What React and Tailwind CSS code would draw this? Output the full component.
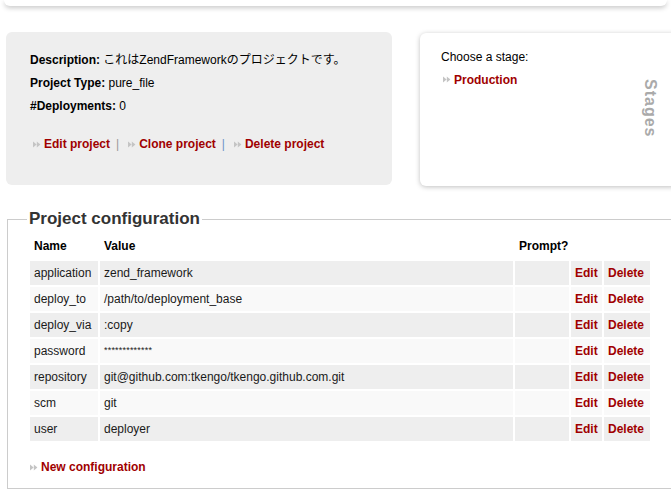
const rows = [
  ['application', 'zend_framework'],
  ['deploy_to', '/path/to/deployment_base'],
  ['deploy_via', ':copy'],
  ['password', null],
  ['repository', 'git@github.com:tkengo/tkengo.github.com.git'],
  ['scm', 'git'],
  ['user', 'deployer'],
];

const Bullet = ({ className = '' }) => (
  <svg width="8" height="7" viewBox="0 0 8 7" className={`inline-block shrink-0 ${className}`}>
    <polygon points="0,0.5 3.6,3.5 0,6.5" fill="#c4c4c4" />
    <polygon points="3.8,0.5 7.4,3.5 3.8,6.5" fill="#c4c4c4" />
  </svg>
);

const Link = ({ children, className = '' }) => (
  <span className={`inline-flex items-center ${className}`}>
    <Bullet className="ml-[3px] mr-[3px]" />
    <span className="font-bold text-[#a00000]">{children}</span>
  </span>
);

export default function App() {
  return (
    <div
      className="relative h-[495px] w-[671px] overflow-hidden bg-white text-[12px] text-[#000]"
      style={{ fontFamily: '"Liberation Sans", Arial, "Noto Sans CJK JP", sans-serif' }}
    >
      <div className="ml-[4px] h-[6px] w-[663px] rounded-b-[7px] bg-white shadow-[0_2px_5px_rgba(0,0,0,0.22)]" />

      <div className="mt-[26px] flex items-start">
        <div className="ml-[6px] h-[153px] w-[386px] shrink-0 rounded-[6px] bg-[#eeeeee] px-[24px] pt-[17px]">
          <div className="leading-[23px]">
            <span className="font-bold">Description:</span> これはZendFrameworkのプロジェクトです。
          </div>
          <div className="leading-[23px]">
            <span className="font-bold">Project Type:</span> pure_file
          </div>
          <div className="leading-[23px]">
            <span className="font-bold">#Deployments:</span> 0
          </div>
          <div className="mt-[15px] flex items-center leading-[23px]">
            <Link>Edit project</Link>
            <span className="mx-[6px] text-[#999]">|</span>
            <Link>Clone project</Link>
            <span className="mx-[6px] text-[#6b94c8]">|</span>
            <Link>Delete project</Link>
          </div>
        </div>

        <div className="ml-[28px] mt-[1px] flex h-[153px] w-[258px] shrink-0 rounded-[6px] bg-white shadow-[0_1px_5px_rgba(0,0,0,0.25)]">
          <div className="flex-1 pl-[21px] pt-[15px]">
            <div className="leading-[18px]">Choose a stage:</div>
            <div className="mt-[4px] leading-[18px]">
              <Link className="-ml-[1px]">Production</Link>
            </div>
          </div>
          <div className="pr-[20px] pt-[46px]">
            <div className="text-[16px] font-bold leading-[16px] tracking-[1px] text-[#aaaaaa] [writing-mode:vertical-rl]">
              Stages
            </div>
          </div>
        </div>
      </div>

      <fieldset className="ml-[7px] mt-[23px] w-[690px] border border-[#cccccc] pb-[13px]">
        <legend className="ml-[19px] px-[2px] text-[17px] font-bold leading-[20px] text-[#333]">
          Project configuration
        </legend>
        <table className="ml-[20px] mt-[6px] border-separate border-spacing-[2px]">
          <thead>
            <tr className="h-[22px] text-left font-bold">
              <th className="w-[68px] px-[4px] pb-[4px] align-middle">Name</th>
              <th className="w-[413px] px-[4px] pb-[4px] align-middle">Value</th>
              <th className="w-[54px] pl-[4px] pr-0 pb-[4px] align-middle">Prompt?</th>
              <th className="w-[31px]" />
              <th className="w-[46px]" />
            </tr>
          </thead>
          <tbody>
            {rows.map(([name, value], i) => {
              const bg = i % 2 === 0 ? 'bg-[#eeeeee]' : 'bg-[#f9f9f9]';
              return (
                <tr key={name} className="h-[24px] text-[#1a1a1a]">
                  <td className={`${bg} px-[4px] align-middle`}>{name}</td>
                  <td className={`${bg} px-[4px] align-middle`}>
                    {value === null ? (
                      <span className="relative -top-[2px] text-[9px] tracking-[0.2px]">*************</span>
                    ) : (
                      value
                    )}
                  </td>
                  <td className={bg} />
                  <td className={`${bg} px-[4px] align-middle font-bold text-[#a00000]`}>Edit</td>
                  <td className={`${bg} px-[4px] align-middle font-bold text-[#a00000]`}>Delete</td>
                </tr>
              );
            })}
          </tbody>
        </table>
        <div className="mt-[16px] ml-[20px] flex items-center leading-[16px]">
          <Link className="-ml-[1px]">New configuration</Link>
        </div>
      </fieldset>
    </div>
  );
}
